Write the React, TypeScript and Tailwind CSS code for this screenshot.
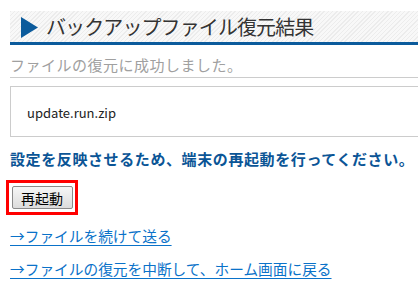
import React from 'react';

const jp = { fontFamily: '"Noto Sans CJK JP", "Noto Sans", sans-serif' };

function App() {
  return (
    <div className="w-[418px] h-[289px] overflow-hidden bg-white pl-[10px] pt-[11px]" style={jp}>
      {/* Title bar */}
      <div className="h-[34px] flex items-center border-b-[3px] border-[#0b5b9c] bg-[repeating-linear-gradient(135deg,#ececec_0px,#ececec_1px,#f8f8f8_1px,#f8f8f8_3px)]">
        <svg width="17" height="21" viewBox="0 0 17 21" className="ml-[11px] mt-[2px]">
          <polygon points="0,0 17,10.5 0,21" fill="#0b5b9c" />
        </svg>
        <h1 className="ml-[8px] text-[20px] leading-none text-[#333] tracking-[-0.9px]">バックアップファイル復元結果</h1>
      </div>

      {/* Result message */}
      <p className="mt-[10px] text-[15px] leading-[20px] text-[#a0a0a0] border-b border-[#cccccc] pb-[2px] tracking-[0.5px]">
        ファイルの復元に成功しました。
      </p>

      {/* File name box */}
      <div className="mt-[8px] h-[51px] w-[420px] border border-[#cccccc] flex items-center pl-[16px] pt-[2px]">
        <span className="text-[13px] text-[#222]">update.run.zip</span>
      </div>

      {/* Notice */}
      <p className="mt-[12px] text-[15px] leading-[20px] font-bold text-[#0b5596] tracking-[0.6px]">
        設定を反映させるため、端末の再起動を行ってください。
      </p>

      {/* Restart button */}
      <div className="mt-[11px] ml-[-4px] w-[72px] h-[35px] border-[3px] border-[#ff0000] flex items-center justify-center">
        <button className="w-[61px] h-[23px] rounded-[2px] border border-[#8a8a8a] bg-gradient-to-b from-[#f6f6f6] to-[#dcdcdc] text-[14px] leading-none text-black">
          再起動
        </button>
      </div>

      {/* Links */}
      <div className="mt-[11px] flex flex-col gap-[13px] items-start text-[14.7px] leading-[20px] text-[#0a72c9]">
        <a href="#" className="underline underline-offset-[3px]">→ファイルを続けて送る</a>
        <a href="#" className="underline underline-offset-[3px]">→ファイルの復元を中断して、ホーム画面に戻る</a>
      </div>
    </div>
  );
}

export default App;
